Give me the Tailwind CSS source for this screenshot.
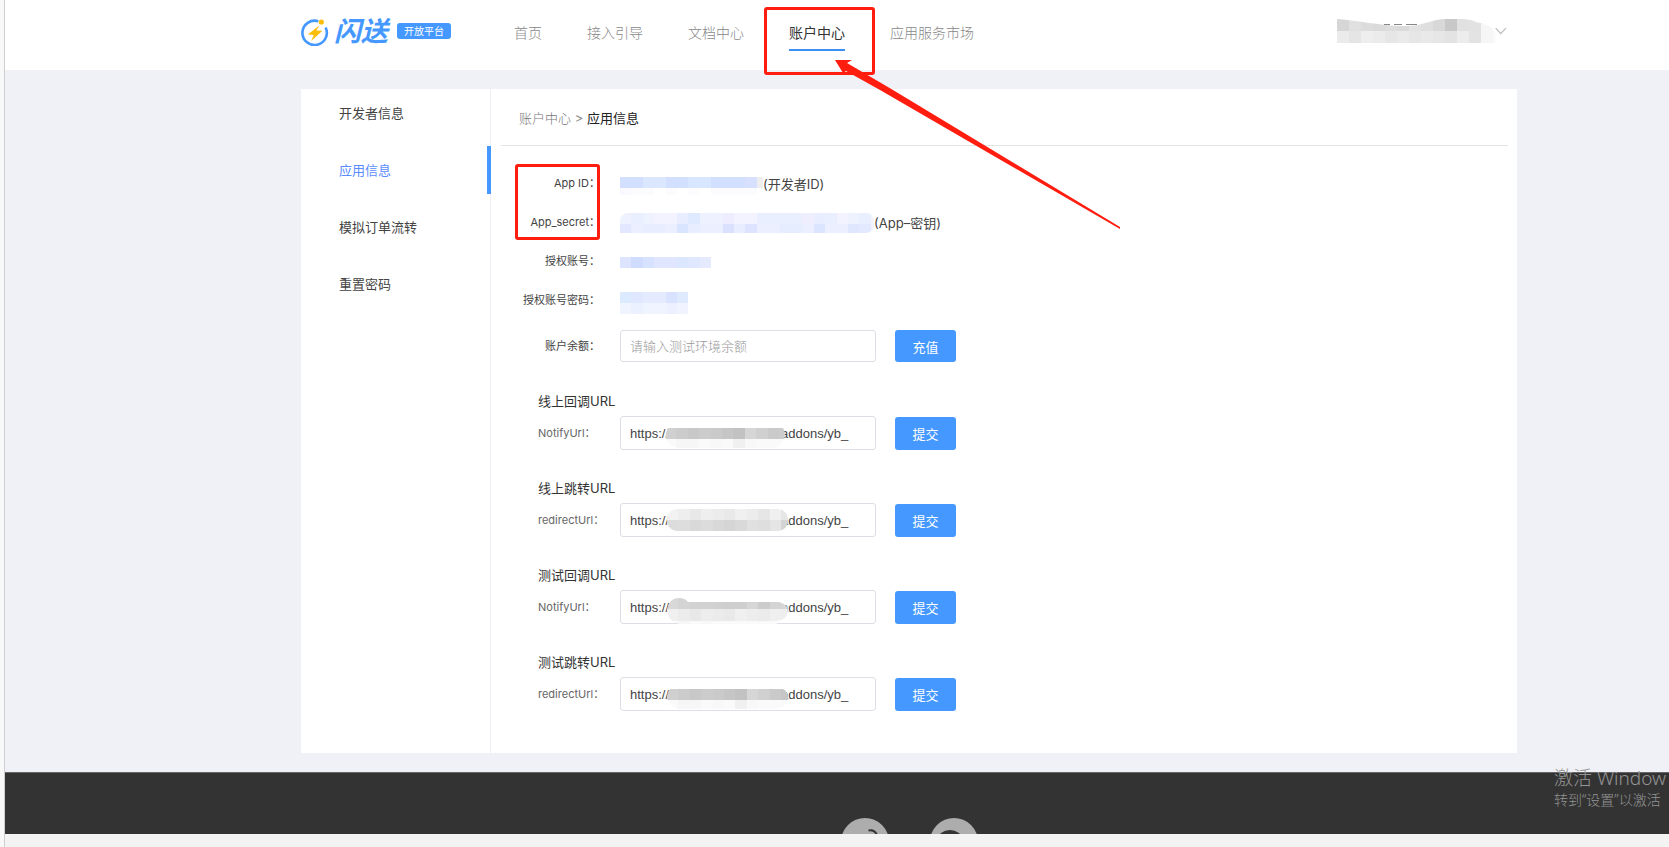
<!DOCTYPE html>
<html lang="zh-CN">
<head>
<meta charset="utf-8">
<title>闪送开放平台</title>
<script src="https://cdn.jsdelivr.net/npm/@tailwindcss/browser@4"></script>
</head>
<body class="relative min-h-screen overflow-x-hidden bg-[#f3f3f3] font-['Inter','Noto_Sans_CJK_SC',sans-serif] text-[13px] leading-5 text-[#444]">
<div class="flex min-h-screen">
  <div class="w-[5px] shrink-0 border-r border-[#cfcfcf] bg-[#f8f8f8]"></div>
  <div class="min-w-0 flex-1">
    <header class="flex h-[70px] items-center bg-white pr-[162px] pl-[296px]">
      <a href="#" class="mb-[6px] flex w-[213px] shrink-0 items-center" aria-label="闪送开放平台">
        <svg class="h-7 w-7" viewBox="0 0 28 28" fill="none" aria-hidden="true">
          <path d="M17.3 3.2A12.2 12.2 0 1 0 24.6 9.5" stroke="#4598ff" stroke-width="2.6"/>
          <circle cx="20.3" cy="4" r="2.6" fill="#fbbd08"/>
          <path d="M18.6 7.2 6.8 16.4l6 .5-2.6 6.2 11.2-10.4-6-.3z" fill="#fbbd08"/>
        </svg>
        <span class="ml-[5px] text-[27px] leading-7 font-bold text-[#4598ff] italic">闪送</span>
        <span class="mb-[2px] ml-[9px] rounded-[3px] bg-[#4598ff] px-[7px] text-[10px] leading-4 text-white">开放平台</span>
      </a>
      <nav class="flex items-center gap-[45px] text-[14px] whitespace-nowrap text-[#888]">
        <a href="#" class="border-y-2 border-transparent pt-[2px] pb-[6px] font-light">首页</a>
        <a href="#" class="border-y-2 border-transparent pt-[2px] pb-[6px] font-light">接入引导</a>
        <a href="#" class="border-y-2 border-transparent pt-[2px] pb-[6px] font-light">文档中心</a>
        <a href="#" class="border-y-2 border-t-transparent border-b-[#3d8ff5] pt-[2px] pb-[6px] text-[#333]">账户中心</a>
        <a href="#" class="border-y-2 border-transparent pt-[2px] pb-[6px] font-light">应用服务市场</a>
      </nav>
      <button type="button" class="mb-2 ml-auto flex items-center" aria-label="账户菜单">
        <svg class="h-6 w-[160px]" viewBox="0 0 160 24" aria-hidden="true">
          <clipPath id="user"><path d="M0 0C22 2 42 6 62 7C88 8 92 0 110 0H126C140 1 135 3 144 4C155 6 162 14 158 24H0Z"/></clipPath>
          <g clip-path="url(#user)" data-cell="12" data-rows="d6d6d6 e0e0e0 dcdcdc dadada dddddd dadada e2e2e2 dfdfdf d8d8d8 c8c8c8 e1e1e1 e2e2e2 f6f6f6 fafafa|ebebeb e5e5e5 eeeeee ebebeb e6e6e6 eaeaea e6e6e6 e9e9e9 e6e6e6 e3e3e3 ececec e3e3e3 f6f6f6 fafafa"></g>
          <path d="M47 5.5h6M57 5.5h8M69 5.5h11" stroke="#888"/>
        </svg>
        <svg class="-ml-[2px] h-3 w-3" viewBox="0 0 12 12" fill="none" stroke="#bbb" stroke-width="1.2" aria-hidden="true"><path d="m.7 3.2 5 5.4 5.2-5.4"/></svg>
      </button>
    </header>

    <main class="bg-[#eff1f6] pt-[19px] pr-[152px] pb-[19px] pl-[296px]">
      <div class="flex bg-white">
        <div class="flex w-[190px] shrink-0">
          <ul class="flex w-full flex-col gap-[9px] shadow-[inset_-1px_0_0_#eceef3]">
            <li><a href="#" class="block h-12 pl-[38px] leading-[48px]">开发者信息</a></li>
            <li><a href="#" class="block h-12 border-r-4 border-[#4598ff] pl-[38px] leading-[48px] text-[#5b8cff]">应用信息</a></li>
            <li><a href="#" class="block h-12 pl-[38px] leading-[48px]">模拟订单流转</a></li>
            <li><a href="#" class="block h-12 pl-[38px] leading-[48px]">重置密码</a></li>
          </ul>
        </div>
        <section class="min-w-0 flex-1 pr-[9px] pb-[42px] pl-[10px]">
          <div class="border-b border-[#e4e4e4] pt-[19px] pb-[17px] pl-[18px]">
            <a href="#" class="font-light text-[#777]">账户中心</a> <span class="text-[#888]">&gt;</span> <span class="text-[#222]">应用信息</span>
          </div>
          <dl class="mt-[17px] grid auto-rows-[39px] grid-cols-[99px_1fr] items-center gap-x-[20px]">
            <dt class="text-right text-[11px]">App ID：</dt>
            <dd class="flex items-center pt-[2px]">
              <svg class="mt-1 h-[18px] w-[143px]" viewBox="0 0 143 18" aria-hidden="true"><g data-cell="11.4" data-rows="d3dfff d3dfff dbe6ff dbe6ff d3dfff d3dfff d8e6ff d8e6ff d3dfff d3dfff d3dfff d8e0ff eeeeee|f9f9ff fcfcff fcfcff ffffff fcfcff ffffff fcfcff ffffff fcfcff fcfcff fcfcff fcfcff ffffff"></g></svg>
              <span>(开发者ID)</span>
            </dd>
            <dt class="text-right text-[11px]">App_secret：</dt>
            <dd class="flex items-center pt-[2px]">
              <svg class="h-5 w-[254px]" viewBox="0 0 254 20" aria-hidden="true"><clipPath id="sec"><rect width="254" height="20" rx="8"/><rect y="10" width="80" height="10"/></clipPath><g clip-path="url(#sec)"><g data-cell="11.4" data-rows="eef2ff e9efff eef2ff f3f3ff f3f3ff e8eeff dfe9ff eef1ff eef1ff ededff f3f3ff f3f3ff e9efff e9efff e9efff e9efff eeeeff e8edff e9efff f3f3ff eef2ff e9efff f4f4ff|e3e7ff ebefff e8eeff e8eeff ebefff d9e5ff e8edff ebefff ebefff d9e1ff e8eeff dee4ff ebefff ebefff e6edff e6edff ebefff dce5ff ebefff ebefff dfe7ff e3e9ff f0f3ff"></g></g></svg>
              <span>(App–密钥)</span>
            </dd>
            <dt class="text-right text-[11px]">授权账号：</dt>
            <dd>
              <svg class="mt-1 h-[11px] w-[92px]" viewBox="0 0 92 11" aria-hidden="true"><g data-cell="11.4" data-rows="dde4ff cfdcff d6e2ff e0e6ff e0e6ff dbe7ff e0e8ff e6eaff"></g></svg>
            </dd>
            <dt class="text-right text-[11px]">授权账号密码：</dt>
            <dd class="pt-[2px]">
              <svg class="mt-1 h-[22px] w-[69px]" viewBox="0 0 69 22" aria-hidden="true"><g data-cell="11.4" data-rows="dceaff e0e8ff e5ebff e5ebff d9e2ff dfeaff|f0f4ff ecf1ff f0f4ff f0f4ff edf0ff f1f4ff"></g></svg>
            </dd>
          </dl>

          <form class="mt-[11px] grid grid-cols-[100px_256px_61px] items-center gap-x-[19px]">
            <label for="balance" class="pr-px text-right text-[11px]">账户余额：</label>
            <input id="balance" type="text" placeholder="请输入测试环境余额" class="h-8 w-full rounded-[3px] border border-[#dcdfe6] bg-white px-[9px] placeholder:font-light placeholder:text-[#999]">
            <button type="button" class="h-8 rounded-[3px] bg-[#4598ff] pt-[2px] text-white">充值</button>
          </form>

          <form class="mt-[29px] grid grid-cols-[63px_256px_61px] items-center gap-x-[19px] pl-[37px]">
            <h2 class="col-span-3 mb-[5px] text-[#333]">线上回调URL</h2>
            <label for="u1" class="text-[11px] whitespace-nowrap text-[#666]">NotifyUrl：</label>
            <div class="relative">
              <input id="u1" type="text" class="block h-[34px] w-full rounded-[3px] border border-[#dcdfe6] bg-white px-[9px] font-['Liberation_Sans',sans-serif]" value="https://&nbsp;&nbsp;&nbsp;&nbsp;&nbsp;&nbsp;&nbsp;&nbsp;&nbsp;&nbsp;&nbsp;&nbsp;&nbsp;&nbsp;&nbsp;&nbsp;&nbsp;&nbsp;&nbsp;&nbsp;&nbsp;&nbsp;&nbsp;&nbsp;&nbsp;&nbsp;&nbsp;&nbsp;&nbsp;&nbsp;&nbsp;addons/yb_">
              <svg class="pointer-events-none absolute top-3 left-[45px] h-5 w-[120px]" viewBox="0 0 120 20" aria-hidden="true"><clipPath id="c1"><path d="M3 0H118Q122 6 118 13Q114 20 106 20H12Q4 18 1 11Q0 5 3 0"/></clipPath><g clip-path="url(#c1)" data-cell="11.4" data-rows="d0d0d0 cccccc c8c8c8 cccccc cacaca c6c6c6 c2c2c2 d6d6d6 d0d0d0 cacaca cccccc|fafafa f6f6f6 f6f6f6 fafafa f8f8f8 fafafa f0f0f0 f8f8f8 fafafa fafafa fafafa"></g></svg>
            </div>
            <button type="button" class="h-[33px] rounded-[3px] bg-[#4598ff] pt-[2px] text-white">提交</button>
          </form>

          <form class="mt-7 grid grid-cols-[63px_256px_61px] items-center gap-x-[19px] pl-[37px]">
            <h2 class="col-span-3 mb-[5px] text-[#333]">线上跳转URL</h2>
            <label for="u2" class="text-[11px] whitespace-nowrap text-[#666]">redirectUrl：</label>
            <div class="relative">
              <input id="u2" type="text" class="block h-[34px] w-full rounded-[3px] border border-[#dcdfe6] bg-white px-[9px] font-['Liberation_Sans',sans-serif]" value="https://&nbsp;&nbsp;&nbsp;&nbsp;&nbsp;&nbsp;&nbsp;&nbsp;&nbsp;&nbsp;&nbsp;&nbsp;&nbsp;&nbsp;&nbsp;&nbsp;&nbsp;&nbsp;&nbsp;&nbsp;&nbsp;&nbsp;&nbsp;&nbsp;&nbsp;&nbsp;&nbsp;&nbsp;&nbsp;&nbsp;&nbsp;addons/yb_">
              <svg class="pointer-events-none absolute top-[6px] left-[47px] h-[22px] w-[121px]" viewBox="0 0 121 22" aria-hidden="true"><clipPath id="c2"><rect width="121" height="22" rx="10"/></clipPath><g clip-path="url(#c2)" data-cell="11.4" data-rows="f2f2f2 eeeeee e8e8e8 eeeeee ececec e9e9e9 f0f0f0 ececec e6e6e6 f0f0f0 e6e6e6|dcdcdc dddddd d9d9d9 dcdcdc d8d8d8 d5d5d5 d9d9d9 e0e0e0 dedede e5e5e5 d4d4d4"></g></svg>
            </div>
            <button type="button" class="h-[33px] rounded-[3px] bg-[#4598ff] pt-[2px] text-white">提交</button>
          </form>

          <form class="mt-7 grid grid-cols-[63px_256px_61px] items-center gap-x-[19px] pl-[37px]">
            <h2 class="col-span-3 mb-[5px] text-[#333]">测试回调URL</h2>
            <label for="u3" class="text-[11px] whitespace-nowrap text-[#666]">NotifyUrl：</label>
            <div class="relative">
              <input id="u3" type="text" class="block h-[34px] w-full rounded-[3px] border border-[#dcdfe6] bg-white px-[9px] font-['Liberation_Sans',sans-serif]" value="https://&nbsp;&nbsp;&nbsp;&nbsp;&nbsp;&nbsp;&nbsp;&nbsp;&nbsp;&nbsp;&nbsp;&nbsp;&nbsp;&nbsp;&nbsp;&nbsp;&nbsp;&nbsp;&nbsp;&nbsp;&nbsp;&nbsp;&nbsp;&nbsp;&nbsp;&nbsp;&nbsp;&nbsp;&nbsp;&nbsp;&nbsp;addons/yb_">
              <svg class="pointer-events-none absolute top-2 left-[47px] h-[26px] w-[121px]" viewBox="0 0 121 26" aria-hidden="true"><clipPath id="c3"><path d="M0 12Q2 0 12 0Q18 0 21 4H112Q121 6 121 14Q119 22 110 23V26H12Q0 22 0 12"/></clipPath><g clip-path="url(#c3)" data-cell="11.4" data-rows="d8d8d8 d4d4d4 d2d2d2 d2d2d2 d0d0d0 cecece cfcfcf d6d6d6 cccccc d4d4d4 d6d6d6|f0f0f0 ececec e8e8e8 ededed ebebeb e9e9e9 f0f0f0 ededed ebebeb efefef eeeeee|fafafa f6f6f6 fafafa f8f8f8 fafafa fafafa fafafa fafafa fafafa fafafa fafafa"></g></svg>
            </div>
            <button type="button" class="h-[33px] rounded-[3px] bg-[#4598ff] pt-[2px] text-white">提交</button>
          </form>

          <form class="mt-7 grid grid-cols-[63px_256px_61px] items-center gap-x-[19px] pl-[37px]">
            <h2 class="col-span-3 mb-[5px] text-[#333]">测试跳转URL</h2>
            <label for="u4" class="text-[11px] whitespace-nowrap text-[#666]">redirectUrl：</label>
            <div class="relative">
              <input id="u4" type="text" class="block h-[34px] w-full rounded-[3px] border border-[#dcdfe6] bg-white px-[9px] font-['Liberation_Sans',sans-serif]" value="https://&nbsp;&nbsp;&nbsp;&nbsp;&nbsp;&nbsp;&nbsp;&nbsp;&nbsp;&nbsp;&nbsp;&nbsp;&nbsp;&nbsp;&nbsp;&nbsp;&nbsp;&nbsp;&nbsp;&nbsp;&nbsp;&nbsp;&nbsp;&nbsp;&nbsp;&nbsp;&nbsp;&nbsp;&nbsp;&nbsp;&nbsp;addons/yb_">
              <svg class="pointer-events-none absolute top-3 left-[47px] h-5 w-[121px]" viewBox="0 0 121 20" aria-hidden="true"><clipPath id="c4"><path d="M3 0H116Q121 2 121 10Q118 20 106 20H12Q4 18 0 10Q0 3 3 0"/></clipPath><g clip-path="url(#c4)" data-cell="11.4" data-rows="d0d0d0 cccccc c8c8c8 cccccc cacaca c6c6c6 c2c2c2 d6d6d6 d0d0d0 cacaca c6c6c6|fafafa f6f6f6 f6f6f6 fafafa f8f8f8 fafafa f0f0f0 f8f8f8 fafafa fafafa fafafa"></g></svg>
            </div>
            <button type="button" class="h-[33px] rounded-[3px] bg-[#4598ff] pt-[2px] text-white">提交</button>
          </form>
        </section>
      </div>
    </main>

    <footer class="flex h-[62px] items-end gap-[41px] border-t border-[#666] bg-[#333] pl-[836px]">
      <a href="#" aria-label="微博"><svg class="block h-[17px] w-12" viewBox="0 0 48 17" aria-hidden="true"><circle cx="24" cy="25" r="24" fill="#adadad"/><path d="M27.500 13.500q6-1.500 8.500 4.500" fill="none" stroke="#333" stroke-width="2"/></svg></a>
      <a href="#" aria-label="微信"><svg class="block h-[17px] w-12" viewBox="0 0 48 17" aria-hidden="true"><circle cx="24" cy="25" r="24" fill="#adadad"/><ellipse cx="20" cy="22" rx="12" ry="9" fill="#333"/></svg></a>
    </footer>
  </div>
</div>

<!-- Callouts drawn over the page -->
<div class="pointer-events-none absolute top-[7px] left-[764px] h-[68px] w-[111px] rounded-[3px] border-3 border-[#ff1d10]"></div>
<div class="pointer-events-none absolute top-[164px] left-[515px] h-[76px] w-[85px] rounded-[3px] border-3 border-[#ff1d10]"></div>
<svg class="pointer-events-none absolute top-[58px] left-[833px] h-[172px] w-[290px]" viewBox="833 58 290 172" aria-hidden="true"><path d="M835 60L852 60L847 63L893 90L1120 227L1120 229L880 90L846 71L843 73Z" fill="#ff1d10"/></svg>
<div class="pointer-events-none absolute top-[766px] right-0 w-[115px] font-['Noto_Sans','Noto_Sans_CJK_SC',sans-serif] font-light whitespace-nowrap text-[#949494]">
  <p class="text-[19px] leading-6">激活 Window</p>
  <p class="text-[14px] leading-5">转到“设置”以激活</p>
</div>

<script>
  // Fills each masked value with its grid of coloured cells
  document.querySelectorAll('[data-rows]').forEach(function (g) {
    var s = Number(g.dataset.cell);
    g.setAttribute('shape-rendering', 'crispEdges');
    g.dataset.rows.split('|').forEach(function (row, y) {
      row.split(' ').forEach(function (c, x) {
        var r = document.createElementNS('http://www.w3.org/2000/svg', 'rect');
        r.setAttribute('x', x * s);
        r.setAttribute('y', y * s);
        r.setAttribute('width', s);
        r.setAttribute('height', s);
        r.setAttribute('fill', '#' + c);
        g.appendChild(r);
      });
    });
  });
</script>
</body>
</html>
